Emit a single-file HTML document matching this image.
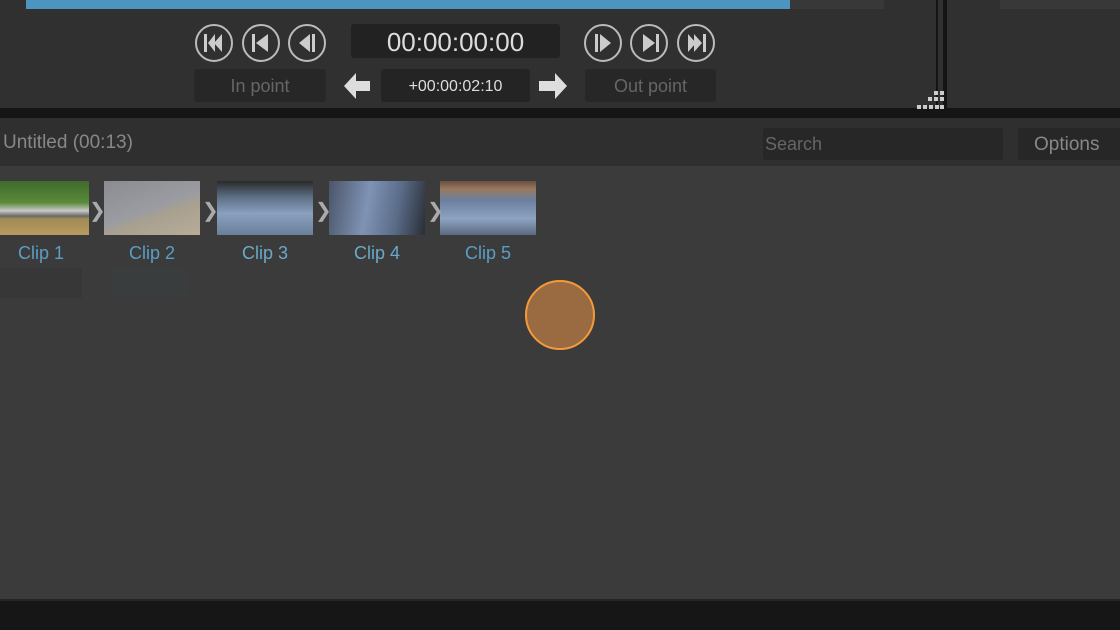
<!DOCTYPE html>
<html><head><style>
*{margin:0;padding:0;box-sizing:border-box}
body{width:1120px;height:630px;overflow:hidden;background:#3b3b3b;font-family:"Liberation Sans","DejaVu Sans",sans-serif;position:relative}
.a{position:absolute}
.btn{position:absolute;background:#272727;border-radius:3px;color:#777;font-size:18px;text-align:center}
.cl{position:absolute;color:#5a9ec3;font-size:18px;text-align:center;width:96px}
.th{position:absolute;top:181px;width:96px;height:54px}
.ar{position:absolute;top:198px;color:#aaa;font-size:20px}
</style></head><body>
<div class="a" style="left:0;top:0;width:1120px;height:108px;background:#303030"></div>
<div class="a" style="left:26px;top:0;width:764px;height:9px;background:#4b95c0"></div>
<div class="a" style="left:790px;top:0;width:94px;height:9px;background:#383838"></div>
<div class="a" style="left:1000px;top:0;width:120px;height:9px;background:#383838"></div>
<div class="a" style="left:936px;top:0;width:2px;height:112px;background:#141414"></div>
<div class="a" style="left:943px;top:0;width:4px;height:112px;background:#141414"></div>
<div class="a" style="left:0;top:108px;width:1120px;height:10px;background:#151515"></div>
<svg class="a" style="left:916px;top:90px" width="30" height="24"><g fill="#ccc">
<rect x="18" y="1" width="4" height="4"/><rect x="24" y="1" width="4" height="4"/>
<rect x="12" y="7" width="4" height="4"/><rect x="18" y="7" width="4" height="4"/><rect x="24" y="7" width="4" height="4"/>
<rect x="1" y="15" width="4" height="4"/><rect x="7" y="15" width="4" height="4"/><rect x="13" y="15" width="4" height="4"/><rect x="19" y="15" width="4" height="4"/><rect x="24" y="15" width="4" height="4"/></g></svg>
<div class="a" style="left:0;top:118px;width:1120px;height:48px;background:#2f2f2f"></div>
<div class="a" style="left:3px;top:132px;color:#888;font-size:19px">Untitled (00:13)</div>
<div class="btn" style="left:763px;top:128px;width:240px;height:32px;text-align:left;padding-left:2px;line-height:33px;color:#666">Search</div>
<div class="btn" style="left:1018px;top:128px;width:110px;height:32px;line-height:33px;color:#888;text-align:left;padding-left:16px;font-size:19px">Options</div>

<svg class="a" style="left:194px;top:23px" width="540" height="42" fill="none" stroke="#bbb" stroke-width="2">
<circle cx="20" cy="20" r="18"/><circle cx="67" cy="20" r="18"/><circle cx="113" cy="20" r="18"/>
<circle cx="409" cy="20" r="18"/><circle cx="455" cy="20" r="18"/><circle cx="502" cy="20" r="18"/>
<g fill="#ccc" stroke="none">
<rect x="10" y="11" width="3" height="18"/><path d="M14 20 21 11v18z M20 20 28 11v18z"/>
<rect x="58" y="11" width="3" height="18"/><path d="M62 20 74 11v18z"/>
<path d="M105 20 116 11v18z"/><rect x="118" y="11" width="3" height="18"/>
<rect x="401" y="11" width="3" height="18"/><path d="M406 11 417 20 406 29z"/>
<path d="M449 11 461 20 449 29z"/><rect x="462" y="11" width="3" height="18"/>
<path d="M494 11 502 20 494 29z M500 11 508 20 500 29z"/><rect x="509" y="11" width="3" height="18"/>
</g></svg>
<div class="btn" style="left:351px;top:24px;width:209px;height:34px;line-height:37px;color:#ddd;font-size:26px;background:#222">00:00:00:00</div>
<div class="btn" style="left:194px;top:69px;width:132px;height:33px;line-height:35px;color:#666">In point</div>
<div class="btn" style="left:381px;top:69px;width:149px;height:33px;line-height:35px;color:#ddd;font-size:16px;background:#242424">+00:00:02:10</div>
<div class="btn" style="left:585px;top:69px;width:131px;height:33px;line-height:35px;color:#666">Out point</div>
<svg class="a" style="left:343px;top:72px" width="230" height="28" fill="#ddd">
<path d="M1 14 13 1v8h14v10H13v8z"/><path d="M224 14 212 1v8H196v10h16v8z"/></svg>

<div class="th" style="left:0;width:89px;background:linear-gradient(#3f6a2c 0,#5a8a3a 40%,#c8c8c8 55%,#6a6a6a 65%,#a08a55 70%,#b89a60 100%)"></div>
<div class="th" style="left:104px;background:linear-gradient(160deg,#8a8c92 0,#9a9ca2 50%,#a8a090 62%,#b8ac98 100%)"></div>
<div class="th" style="left:217px;background:linear-gradient(#2a2a2a 0,#5d6f86 30%,#8aa0be 60%,#6b7f9c 100%)"></div>
<div class="th" style="left:329px;background:linear-gradient(100deg,#4a5568 0,#7f93b5 40%,#5a6c88 70%,#2a2e36 100%)"></div>
<div class="th" style="left:440px;background:linear-gradient(#6a5040 0,#9a7a60 15%,#6a7f9e 35%,#8ea3c2 70%,#5a6a80 100%)"></div>
<div class="ar" style="left:89px">&#x276F;</div><div class="ar" style="left:202px">&#x276F;</div>
<div class="ar" style="left:315px">&#x276F;</div><div class="ar" style="left:427px">&#x276F;</div>
<div class="cl" style="left:-7px;top:243px">Clip 1</div>
<div class="cl" style="left:104px;top:243px">Clip 2</div>
<div class="cl" style="left:217px;top:243px;color:#6aa8cc">Clip 3</div>
<div class="cl" style="left:329px;top:243px;color:#6aa8cc">Clip 4</div>
<div class="cl" style="left:440px;top:243px">Clip 5</div>
<div class="a" style="left:0;top:268px;width:82px;height:30px;background:#373737"></div>
<div class="a" style="left:113px;top:268px;width:74px;height:30px;background:#3a3d3e"></div>

<div class="a" style="left:525px;top:280px;width:70px;height:70px;border-radius:50%;background:#9a6a40;border:2px solid #f59a3c"></div>
<div class="a" style="left:0;top:599px;width:1120px;height:2px;background:#262626"></div>
<div class="a" style="left:0;top:601px;width:1120px;height:29px;background:#161616"></div>
</body></html>
